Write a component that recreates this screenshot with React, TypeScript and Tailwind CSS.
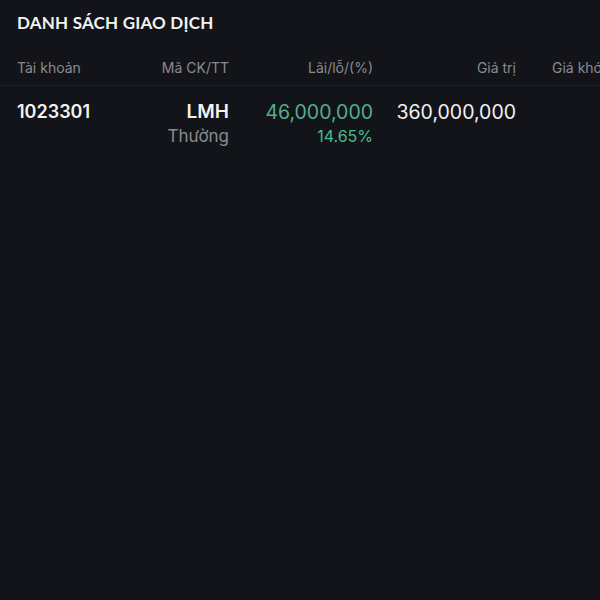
import React from 'react';

const columns = [
  { label: 'Tài khoản', className: 'w-[110px] text-left' },
  { label: 'Mã CK/TT', className: 'w-[102px] text-right' },
  { label: 'Lãi/lỗ/(%)', className: 'w-[144px] text-right' },
  { label: 'Giá trị', className: 'w-[143px] text-right' },
  { label: 'Giá khớp', className: 'pl-[36px] text-left' },
];

const App: React.FC = () => {
  return (
    <div
      className="w-[600px] h-[600px] bg-[#131419] overflow-hidden"
      style={{ fontFamily: 'Inter, "Noto Sans", sans-serif' }}
    >
      <div className="px-[17px] pt-[10px] h-[46px]">
        <h1
          className="text-[17px] font-bold text-[#f2f2f2] tracking-[0.2px]"
          style={{ fontFamily: 'Lato, sans-serif' }}
        >
          DANH SÁCH GIAO DỊCH
        </h1>
      </div>

      {/* Header */}
      <div className="flex items-center h-[40px] pt-[4px] pl-[17px] border-b border-[#1f2025] whitespace-nowrap">
        {columns.map((col) => (
          <div key={col.label} className={`shrink-0 text-[14px] text-[#8a8b90] ${col.className}`}>
            {col.label}
          </div>
        ))}
      </div>

      {/* Row */}
      <div className="flex items-start pl-[17px] pt-[13px] whitespace-nowrap">
        <div className="w-[110px] shrink-0 text-[18px] font-semibold text-[#f2f2f2] leading-[26px]">
          1023301
        </div>
        <div className="w-[102px] shrink-0 text-right">
          <div className="text-[19px] font-semibold text-[#f2f2f2] leading-[26px]">LMH</div>
          <div className="text-[17px] text-[#8a8b90] leading-[22px]">Thường</div>
        </div>
        <div className="w-[144px] shrink-0 text-right">
          <div className="text-[19.5px] text-[#55ad8b] leading-[26px]">46,000,000</div>
          <div className="text-[16px] text-[#45bd8e] leading-[22px]">14.65%</div>
        </div>
        <div className="w-[143px] shrink-0 text-right">
          <div className="text-[19.5px] text-[#f2f2f2] leading-[26px]">360,000,000</div>
        </div>
      </div>
    </div>
  );
};

export default App;
